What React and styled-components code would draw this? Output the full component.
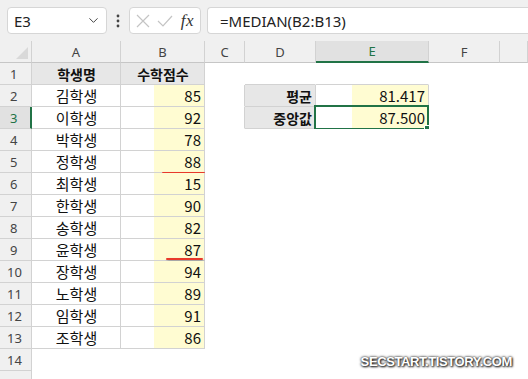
import React from "react";
import styled, { createGlobalStyle } from "styled-components";
import { ChevronDown } from "lucide-react";

const green = "#217346";
const grid = "#d2d2d2";
const yellow = "#fffcd2";
const ui = `"Noto Sans", "Noto Sans CJK KR", sans-serif`;
const cellFont = `"Noto Sans CJK KR", "Noto Sans", sans-serif`;

const GlobalStyle = createGlobalStyle`
  html, body {
    margin: 0;
    padding: 0;
    background: #ffffff;
  }
  body {
    width: 528px;
    height: 379px;
    overflow: hidden;
  }
`;

const Page = styled.div`
  position: relative;
  width: 528px;
  height: 379px;
  overflow: hidden;
  background: #ffffff;
  font-family: ${ui};
`;

const FormulaBar = styled.div`
  display: flex;
  align-items: center;
  height: 41px;
  box-sizing: border-box;
  padding: 7px 0 7px 7px;
  background: #f0f0f0;
`;

const Box = styled.div`
  box-sizing: border-box;
  height: 27px;
  display: flex;
  align-items: center;
  background: #ffffff;
  border: 1px solid #d6d6d6;
  border-radius: 4px;
`;

const NameBox = styled(Box)`
  width: 100px;
  padding: 0 5px 0 6px;
  justify-content: space-between;
  font-size: 15px;
  color: #222;
`;

const Dots = styled.div`
  width: 22px;
  display: flex;
  justify-content: center;
  color: #444;
`;

const FxBox = styled(Box)`
  width: 72px;
  padding: 0 6px 0 6px;
  justify-content: space-between;
`;

const Fx = styled.span`
  font-family: "Liberation Serif", serif;
  font-style: italic;
  font-size: 17px;
  color: #333;
  letter-spacing: 0.5px;
`;

const FormulaInput = styled(Box)`
  flex: 1;
  margin-left: 6px;
  padding-left: 12px;
  border-right: none;
  border-radius: 4px 0 0 4px;
  font-size: 15px;
  color: #222;
`;

const Sheet = styled.div`
  display: grid;
  grid-template-columns: 32px 89px 84px 40px 71px 113px 71px 1fr;
  grid-auto-rows: 22px;
`;

const Corner = styled.div`
  position: relative;
  box-sizing: border-box;
  background: #f0f0f0;
  border-right: 1px solid ${grid};
  border-bottom: 1px solid #c6c6c6;
  &::after {
    content: "";
    position: absolute;
    right: 3px;
    bottom: 3px;
    border-left: 12px solid transparent;
    border-bottom: 12px solid #d9d9d9;
  }
`;

const ColHead = styled.div`
  box-sizing: border-box;
  display: flex;
  align-items: center;
  justify-content: center;
  font-family: ${ui};
  font-size: 13px;
  color: ${(p) => (p.$active ? green : "#444")};
  background: ${(p) => (p.$active ? "#e1e1e1" : "#f0f0f0")};
  border-right: 1px solid ${grid};
  border-bottom: ${(p) => (p.$active ? `2px solid ${green}` : "1px solid #c6c6c6")};
`;

const RowHead = styled.div`
  box-sizing: border-box;
  display: flex;
  align-items: center;
  padding-left: ${(p) => (p.$n > 9 ? 7 : 10)}px;
  font-family: ${ui};
  font-size: 13px;
  color: ${(p) => (p.$active ? green : "#444")};
  background: ${(p) => (p.$active ? "#e1e1e1" : "#f0f0f0")};
  border-bottom: 1px solid ${grid};
  border-right: ${(p) => (p.$active ? `2px solid ${green}` : `1px solid ${grid}`)};
`;

const Cell = styled.div`
  position: relative;
  box-sizing: border-box;
  display: flex;
  align-items: center;
  justify-content: ${(p) =>
    p.$align === "right" ? "flex-end" : p.$align === "center" ? "center" : "flex-start"};
  padding: 0 3px 0 4px;
  font-family: ${cellFont};
  font-size: ${(p) => (p.$bold ? 14 : 15)}px;
  font-weight: ${(p) => (p.$bold ? 700 : 400)};
  color: #111;
  background: ${(p) =>
    p.$fill === "head"
      ? "#e7e7e7"
      : p.$fill
      ? `linear-gradient(to right, #ffffff 0 ${p.$fill}px, ${yellow} ${p.$fill}px)`
      : "#ffffff"};
  border-right: 1px solid ${(p) => (p.$r ? grid : "transparent")};
  border-bottom: 1px solid ${(p) => (p.$b ? grid : "transparent")};
`;

const Selection = styled.div`
  position: absolute;
  left: -2px;
  top: -2px;
  right: -1px;
  bottom: -2px;
  border: 2px solid ${green};
  pointer-events: none;
  &::after {
    content: "";
    position: absolute;
    right: -5px;
    bottom: -5px;
    width: 6px;
    height: 6px;
    background: ${green};
    border: 1px solid #ffffff;
  }
`;

const RedMark = styled.div`
  position: absolute;
  bottom: ${(p) => p.$bottom}px;
  right: ${(p) => p.$right}px;
  width: ${(p) => p.$w}px;
  height: 2px;
  background: #e8392b;
  box-shadow: 1px 2px 3px rgba(0, 0, 0, 0.4);
  border-radius: 1px;
`;

const Watermark = styled.div`
  position: absolute;
  right: 16px;
  bottom: 10px;
  font-family: "Liberation Sans", sans-serif;
  font-weight: 700;
  font-size: 13px;
  letter-spacing: -0.4px;
  color: #ffffff;
  text-shadow: 1px 1px 2px #222, 0 0 3px #444, 0 0 2px #555;
`;

const names = ["김학생", "이학생", "박학생", "정학생", "최학생", "한학생", "송학생", "윤학생", "장학생", "노학생", "임학생", "조학생"];
const scores = [85, 92, 78, 88, 15, 90, 82, 87, 94, 89, 91, 86];
const columns = ["A", "B", "C", "D", "E", "F", ""];

const marks = {
  5: { bottom: -2, right: -1, w: 43 },
  9: { bottom: 0, right: 1, w: 37 },
};

function rowCells(r) {
  const cells = [];
  const inTable = r <= 13;
  // A
  cells.push(
    r === 1 ? (
      <Cell key="A" $align="center" $bold $fill="head" $r $b>학생명</Cell>
    ) : inTable ? (
      <Cell key="A" $align="center" $r $b>{names[r - 2]}</Cell>
    ) : (
      <Cell key="A" />
    )
  );
  // B
  cells.push(
    r === 1 ? (
      <Cell key="B" $align="center" $bold $fill="head" $r $b>수학점수</Cell>
    ) : inTable ? (
      <Cell key="B" $align="right" $fill={33} $r $b>
        {scores[r - 2]}
        {marks[r] && <RedMark $bottom={marks[r].bottom} $right={marks[r].right} $w={marks[r].w} />}
      </Cell>
    ) : (
      <Cell key="B" />
    )
  );
  // C
  cells.push(<Cell key="C" $r={r === 2 || r === 3} />);
  // D
  if (r === 2) cells.push(<Cell key="D" $align="right" $bold $fill="head" $r $b>평균</Cell>);
  else if (r === 3) cells.push(<Cell key="D" $align="right" $bold $fill="head" $r $b>중앙값</Cell>);
  else cells.push(<Cell key="D" $b={r === 1} />);
  // E
  if (r === 2) cells.push(<Cell key="E" $align="right" $fill={36} $r $b>81.417</Cell>);
  else if (r === 3)
    cells.push(
      <Cell key="E" $align="right" $fill={36} $r $b>
        87.500
        <Selection />
      </Cell>
    );
  else cells.push(<Cell key="E" $b={r === 1} />);
  cells.push(<Cell key="F" />);
  cells.push(<Cell key="G" />);
  return cells;
}

export default function App() {
  // row 15 only peeks in at the bottom edge, its number stays out of view
  const rows = Array.from({ length: 15 }, (_, i) => i + 1);
  return (
    <Page>
      <GlobalStyle />
      <FormulaBar>
        <NameBox>
          E3
          <ChevronDown size={15} color="#444" strokeWidth={1.6} />
        </NameBox>
        <Dots>
          <svg width="4" height="14" viewBox="0 0 4 14">
            <circle cx="2" cy="2" r="1.4" fill="#444" />
            <circle cx="2" cy="7" r="1.4" fill="#444" />
            <circle cx="2" cy="12" r="1.4" fill="#444" />
          </svg>
        </Dots>
        <FxBox>
          <svg width="14" height="14" viewBox="0 0 14 14">
            <path d="M1 1 L13 13 M13 1 L1 13" stroke="#c4c4c4" strokeWidth="1.2" fill="none" />
          </svg>
          <svg width="16" height="12" viewBox="0 0 16 12">
            <path d="M1 6 L6 11 L15 1" stroke="#c4c4c4" strokeWidth="1.2" fill="none" />
          </svg>
          <Fx>fx</Fx>
        </FxBox>
        <FormulaInput>=MEDIAN(B2:B13)</FormulaInput>
      </FormulaBar>
      <Sheet>
        <Corner />
        {columns.map((c) => (
          <ColHead key={c || "g"} $active={c === "E"}>{c}</ColHead>
        ))}
        {rows.map((r) => (
          <React.Fragment key={r}>
            <RowHead $n={r} $active={r === 3}>{r < 15 ? r : ""}</RowHead>
            {rowCells(r)}
          </React.Fragment>
        ))}
      </Sheet>
      <Watermark>SECSTART.TISTORY.COM</Watermark>
    </Page>
  );
}
